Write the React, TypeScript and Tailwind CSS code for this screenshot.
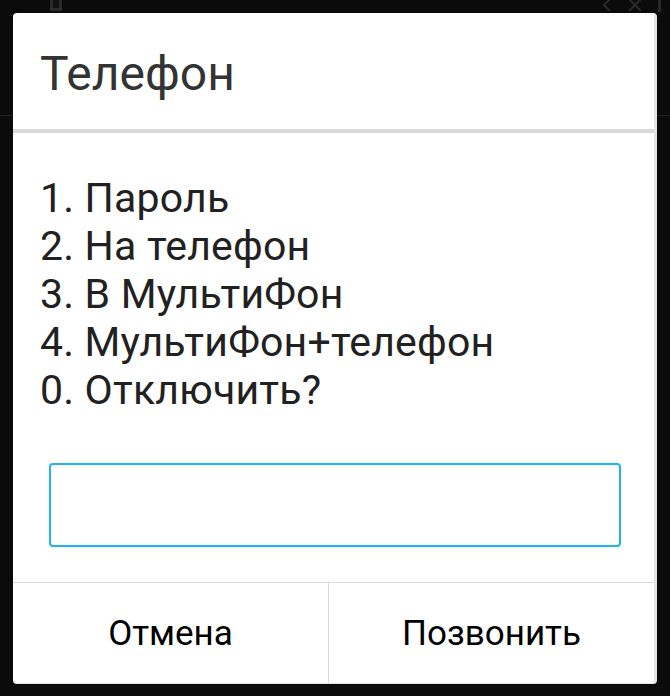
import { useState } from 'react';

const items = [
  '1. Пароль',
  '2. На телефон',
  '3. В МультиФон',
  '4. МультиФон+телефон',
  '0. Отключить?',
];

function BackgroundBar() {
  return (
    <div className="flex h-[116px] items-start justify-between border-b border-[#202020] pl-[50px] pr-[9px]">
      <div className="h-[11px] w-[12px] border-[3px] border-t-0 border-[#2a2a2a] bg-[#121212]" />
      <div className="flex items-start gap-[16px]">
        <svg width="10" height="12" viewBox="0 0 10 12" className="mt-[-1px]">
          <polyline points="8,0 2,6 8,12" fill="none" stroke="#2a2a2a" strokeWidth="2" />
        </svg>
        <svg width="14" height="12" viewBox="0 0 14 12" className="mt-[-1px]">
          <path d="M1 0 L13 12 M13 0 L1 12" fill="none" stroke="#2a2a2a" strokeWidth="2" />
        </svg>
        <div className="h-[12px] w-[3px] bg-[#2a2a2a]" />
      </div>
    </div>
  );
}

export default function App() {
  const [value, setValue] = useState('');

  return (
    <div className="relative h-[696px] w-[670px] overflow-hidden bg-[#0b0b0b] font-['Roboto','Noto_Sans',sans-serif]">
      <BackgroundBar />

      {/* Dialog */}
      <div className="absolute left-[13px] top-[13px] flex h-[671px] w-[644px] flex-col overflow-hidden rounded-[4px] border-r-[3px] border-b-[1px] border-[#e4e4e4] bg-white">
        <div className="h-[116px] shrink-0 pl-[27px] pt-[33px]">
          <h1 className="text-[48px] leading-[56px] font-normal text-[#333333]">Телефон</h1>
        </div>
        <div className="h-[4px] shrink-0 bg-[#d9d9d9]" />

        <div className="flex flex-1 flex-col pt-[41px]">
          <div className="pl-[27px] text-[41px] leading-[48px] tracking-[0.2px] text-[#212121]">
            {items.map((item) => (
              <div key={item}>{item}</div>
            ))}
          </div>

          <div className="mt-[49px] pl-[36px] pr-[33px]">
            <input
              value={value}
              onChange={(e) => setValue(e.target.value)}
              className="block h-[84px] w-full rounded-[4px] border-2 border-[#1eb5ee] bg-white px-3 text-[35px] text-[#212121] outline-none"
            />
          </div>

          <div className="mt-auto flex h-[101px] border-t border-[#d9d9d9]">
            <button className="flex w-[316px] shrink-0 items-center justify-center border-r border-[#d9d9d9] pt-[2px] text-[35px] text-black">
              Отмена
            </button>
            <button className="flex flex-1 items-center justify-center pt-[2px] text-[35px] text-black">
              Позвонить
            </button>
          </div>
        </div>
      </div>
    </div>
  );
}
